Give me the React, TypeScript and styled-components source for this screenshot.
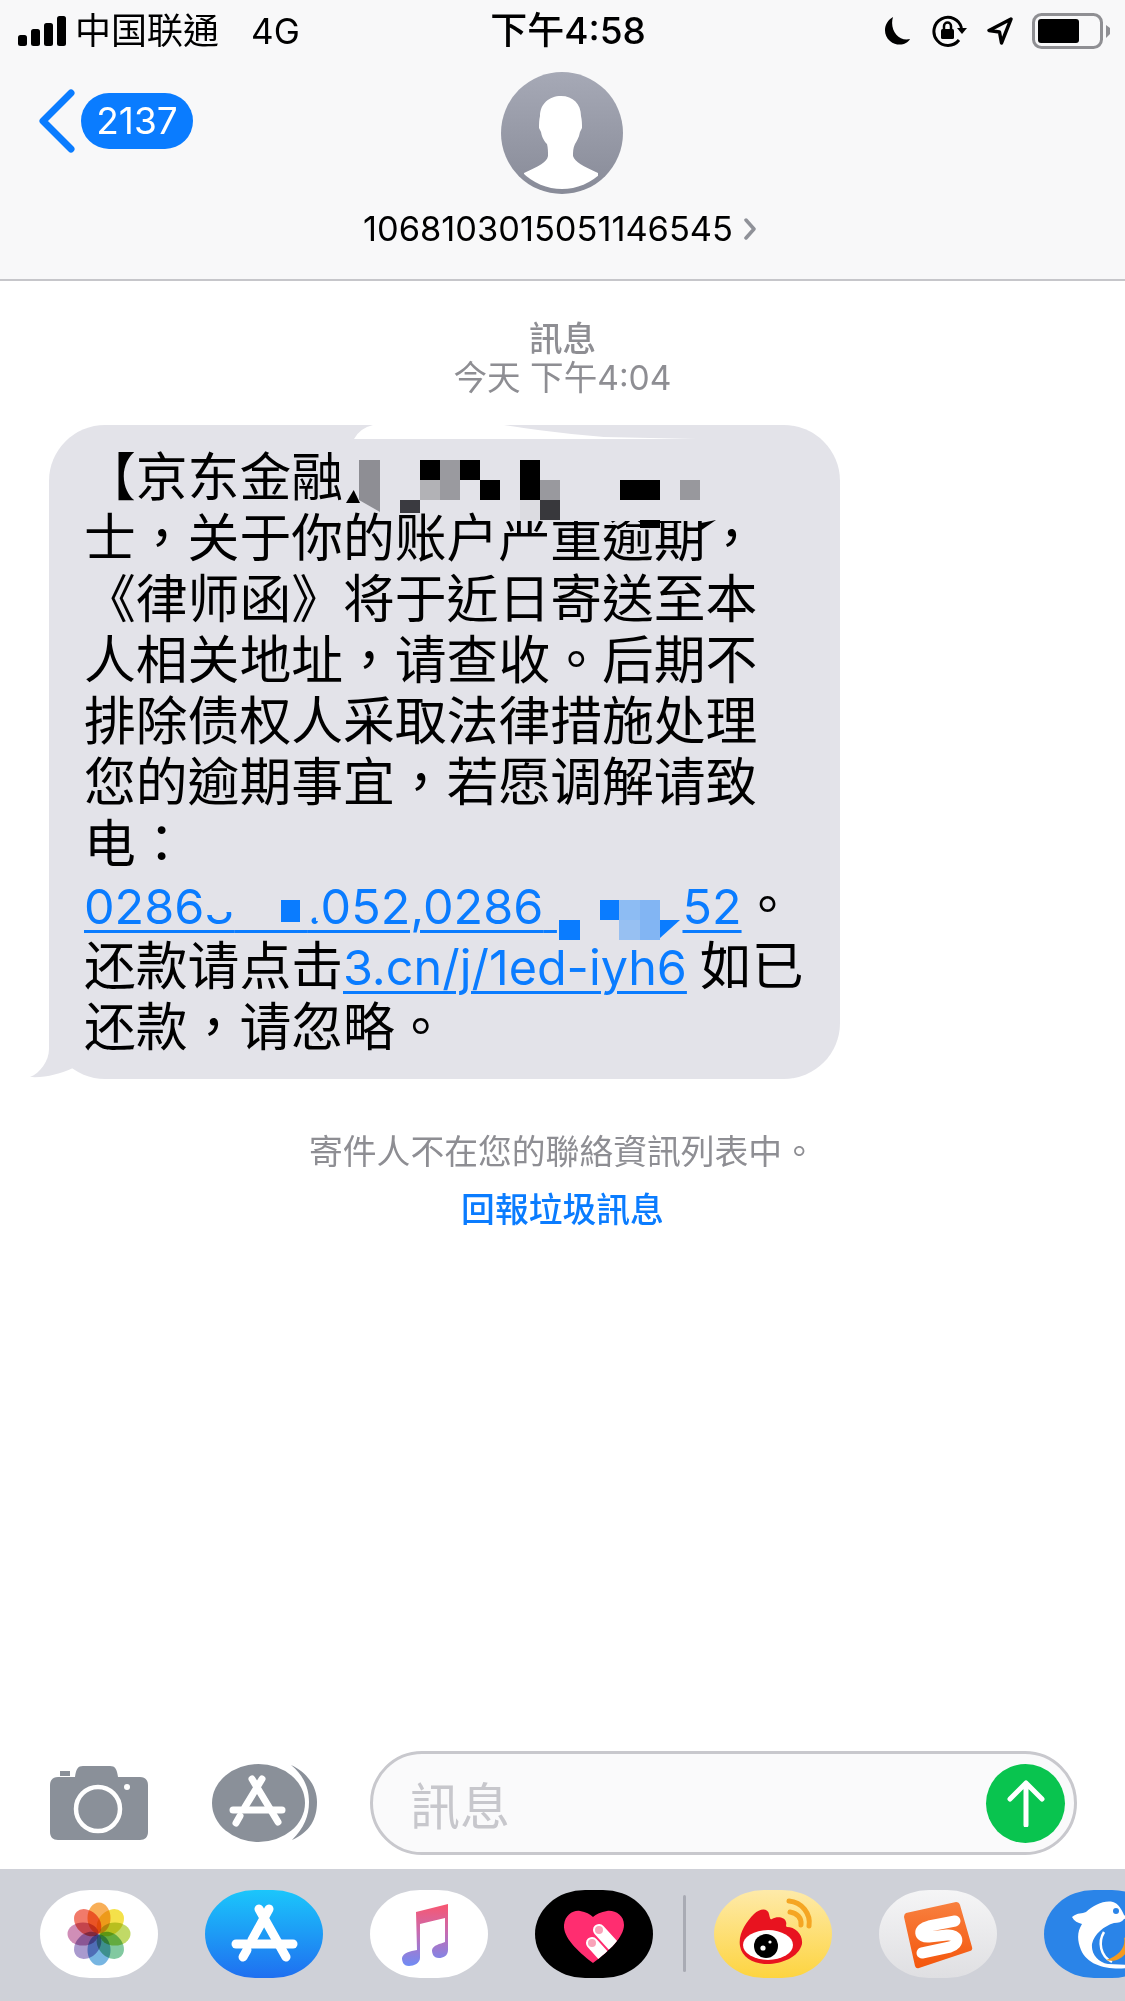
import React from "react";
import styled, { createGlobalStyle } from "styled-components";

const Global = createGlobalStyle`
  html, body { margin: 0; padding: 0; background: #fff; }
  body { font-family: Inter, "Noto Sans CJK TC", sans-serif; }
`;

const Page = styled.div`
  width: 1125px;
  height: 2001px;
  display: flex;
  flex-direction: column;
  overflow: hidden;
  background: #fff;
  color: #000;
`;

const Header = styled.header`
  height: 279px;
  flex-shrink: 0;
  background: #f8f8f9;
  border-bottom: 2px solid #c6c6ca;
`;

const StatusBar = styled.div`
  height: 62px;
  display: grid;
  grid-template-columns: 1fr auto 1fr;
  align-items: center;
  padding: 0 15px 0 18px;
`;

const StatusLeft = styled.div`
  display: flex;
  align-items: center;
  font-size: 36px;
  line-height: 62px;
`;

const Carrier = styled.span`
  margin-left: 9px;
`;

const Network = styled.span`
  margin-left: 32px;
  font-size: 35px;
`;

const Clock = styled.div`
  font-size: 37px;
  font-weight: 500;
  line-height: 62px;
  margin-left: 8px;
`;

const StatusRight = styled.div`
  display: flex;
  align-items: center;
  justify-content: flex-end;
  gap: 19px;
`;

const Nav = styled.div`
  display: grid;
  grid-template-columns: 1fr auto 1fr;
`;

const Back = styled.div`
  display: flex;
  align-items: center;
  padding: 27px 0 0 38px;
  gap: 5px;
  align-self: start;
`;

const Badge = styled.div`
  width: 112px;
  height: 56px;
  border-radius: 28px;
  background: #0a7cff;
  color: #fff;
  font-size: 37px;
  line-height: 56px;
  text-align: center;
`;

const Contact = styled.div`
  display: flex;
  flex-direction: column;
  align-items: center;
  padding-top: 10px;
`;

const NumberRow = styled.div`
  display: flex;
  align-items: center;
  gap: 10px;
  font-size: 34.4px;
  line-height: 40px;
  margin: 15px 5px 0 0;
`;

const Thread = styled.main`
  flex: 1;
  display: flex;
  flex-direction: column;
  align-items: center;
  padding-top: 38px;
`;

const Stamp = styled.div`
  font-size: 33.6px;
  line-height: 39px;
  color: #8e8e93;
  text-align: center;
  font-weight: ${(p: { $strong?: boolean }) => (p.$strong ? 500 : 400)};
`;

const Bubble = styled.div`
  position: relative;
  align-self: flex-start;
  box-sizing: border-box;
  width: 791px;
  height: 654px;
  margin: 28px 0 0 49px;
  padding: 22px 0 0 35px;
  border-radius: 56px;
  background: #e3e3e9;
`;

const Line = styled.div`
  height: 61.1px;
  line-height: 61.1px;
  font-size: 51.8px;
  white-space: nowrap;
`;

const Link = styled.span`
  color: #0a7cff;
  font-size: 48.5px;
  text-decoration: underline;
  text-decoration-thickness: 3px;
  text-underline-offset: 6px;
`;

const Gap = styled.span<{ $w: number }>`
  letter-spacing: ${(p) => p.$w}px;
`;

const Spaced = styled.span`
  margin-left: 13px;
`;

const Tail = styled.svg`
  position: absolute;
  left: -19px;
  bottom: 0;
`;

const Smear = styled.svg`
  position: absolute;
  left: 305px;
  top: 0;
`;

const Patch = styled.div<{ $x: number; $y: number; $w: number; $h: number; $c: string; $clip?: string }>`
  position: absolute;
  left: ${(p) => p.$x - 49}px;
  top: ${(p) => p.$y - 425}px;
  width: ${(p) => p.$w}px;
  height: ${(p) => p.$h}px;
  background: ${(p) => p.$c};
  clip-path: ${(p) => p.$clip || "none"};
`;

const Notice = styled.div`
  margin-top: 50px;
  font-size: 33.8px;
  line-height: 46px;
  color: #8e8e93;
  white-space: nowrap;
`;

const Report = styled.div`
  margin-top: 12px;
  font-size: 33.8px;
  line-height: 46px;
  font-weight: 500;
  color: #0a7cff;
`;

const Compose = styled.div`
  display: flex;
  align-items: center;
  height: 104px;
  padding-left: 50px;
  margin-bottom: 14px;
  flex-shrink: 0;
`;

const AppsButton = styled.div`
  margin-left: 64px;
  display: flex;
`;

const Field = styled.div`
  box-sizing: border-box;
  width: 707px;
  height: 104px;
  margin-left: 52px;
  border: 3px solid #c8c8cd;
  border-radius: 52px;
  background: #fafafb;
  display: flex;
  align-items: center;
  justify-content: space-between;
  padding: 0 9px 0 37px;
`;

const Placeholder = styled.span`
  font-size: 50px;
  color: #c7c7cc;
`;

const Send = styled.div`
  width: 79px;
  height: 79px;
  border-radius: 50%;
  background: #09c44f;
  display: flex;
  align-items: center;
  justify-content: center;
`;

const Dock = styled.div`
  box-sizing: border-box;
  height: 132px;
  flex-shrink: 0;
  background: #cfd1d8;
  display: flex;
  align-items: flex-start;
  padding: 21px 0 0 40px;
  gap: 47px;
`;

const AppIcon = styled.div<{ $bg: string }>`
  width: 118px;
  height: 88px;
  flex-shrink: 0;
  border-radius: 50px / 44px;
  background: ${(p) => p.$bg};
  overflow: hidden;
  display: flex;
`;

const DockDivider = styled.div`
  width: 3px;
  height: 77px;
  margin: 5px -19px 0 -17px;
  flex-shrink: 0;
  border-radius: 2px;
  background: #a9abb4;
`;

type Block = [number, number, number, number, string, string?];

const mosaic: Block[] = [
  [500, 503, 225, 18, "#e3e3e9"],
  [346, 490, 14, 13, "#000", "polygon(55% 0, 100% 100%, 0 100%)"],
  [359, 460, 21, 40, "#8e8e94"],
  [359, 500, 21, 12, "#8e8e94", "polygon(0 0, 100% 0, 100% 100%)"],
  [420, 460, 20, 20, "#000"],
  [440, 460, 20, 40, "#9a9a9f"],
  [460, 460, 20, 20, "#000"],
  [480, 480, 20, 20, "#000"],
  [420, 480, 20, 20, "#b2b2b6"],
  [400, 500, 20, 13, "#3a3a40"],
  [520, 460, 20, 40, "#000"],
  [540, 480, 20, 20, "#99999e"],
  [520, 500, 20, 20, "#dcdce1"],
  [540, 500, 20, 20, "#38383c"],
  [620, 480, 40, 20, "#000"],
  [680, 480, 20, 20, "#98989d"],
  [640, 520, 20, 8, "#000"],
  [700, 520, 16, 11, "#000", "polygon(0 30%, 100% 0, 0 100%)"],
  [208, 882, 34, 30, "#e3e3e9"],
  [316, 885, 7, 36, "#e3e3e9"],
  [281, 900, 19, 22, "#0a7cff"],
  [559, 920, 21, 20, "#0a7cff"],
  [600, 900, 19, 20, "#0a7cff"],
  [619, 900, 21, 20, "#8dbcf3"],
  [640, 900, 20, 40, "#82b5f3"],
  [619, 920, 21, 20, "#97c0f2"],
  [660, 920, 20, 18, "#0a7cff", "polygon(0 0, 100% 0, 0 100%)"],
];

const FLOWER = ["#f7a13a", "#f2dc2a", "#b6d24b", "#6cc08f", "#5fa8dc", "#9a88c6", "#c87aab", "#ef6350"];

const HEART = "M58 73 C42 61 28 47 29 35 C30 25 38 20 45 21 C51 22 55 24 58 27 C61 24 66 22 72 21 C80 20 89 25 89 35 C89 47 74 61 58 73 Z";

const Icon = styled.svg`
  display: block;
  flex-shrink: 0;
`;

export default function App() {
  return (
    <Page>
      <Global />
      <Header>
        <StatusBar>
          <StatusLeft>
            <Icon width="48" height="30" viewBox="0 0 48 30">
              <rect x="0" y="19" width="9" height="11" rx="2.5" />
              <rect x="13" y="13" width="9" height="17" rx="2.5" />
              <rect x="26" y="7" width="9" height="23" rx="2.5" />
              <rect x="39" y="0" width="9" height="30" rx="2.5" />
            </Icon>
            <Carrier>中国联通</Carrier>
            <Network>4G</Network>
          </StatusLeft>
          <Clock>下午4:58</Clock>
          <StatusRight>
            <Icon width="31" height="30" viewBox="0 0 31 30">
              <path d="M11 1 C2 6 0 18 8 25 C15 31 25 29 28 23 C17 26 7 14 11 1 Z" />
            </Icon>
            <Icon width="35" height="32" viewBox="0 0 35 32">
              <path d="M27 25 A14 14 0 1 1 29.5 13" fill="none" stroke="#000" strokeWidth="3" />
              <path d="M25 13 L35 13 L30 19 Z" />
              <rect x="9" y="14" width="13" height="10" rx="1.5" />
              <path d="M12 14 V11 A3.5 3.5 0 0 1 19 11 V14" fill="none" stroke="#000" strokeWidth="2.5" />
            </Icon>
            <Icon width="27" height="28" viewBox="0 0 27 28">
              <path d="M25 2 L3 13.5 L13.5 15 L15.5 26 Z" fill="none" stroke="#000" strokeWidth="3.4" strokeLinejoin="round" />
            </Icon>
            <Icon width="78" height="36" viewBox="0 0 78 36">
              <rect x="1.5" y="1.5" width="68" height="33" rx="8" fill="none" stroke="#8f8f93" strokeWidth="3" />
              <rect x="6" y="6" width="41" height="24" rx="3" />
              <path d="M74 12 L78 15 V21 L74 25 Z" fill="#8f8f93" />
            </Icon>
          </StatusRight>
        </StatusBar>
        <Nav>
          <Back>
            <Icon width="38" height="64" viewBox="0 0 38 64">
              <path d="M33 4 L5 32 L33 60" fill="none" stroke="#0a7cff" strokeWidth="7" strokeLinecap="round" strokeLinejoin="round" />
            </Icon>
            <Badge>2137</Badge>
          </Back>
          <Contact>
            <Icon width="122" height="122" viewBox="0 0 122 122">
              <defs>
                <linearGradient id="av" x1="0" y1="0" x2="0" y2="1">
                  <stop offset="0" stopColor="#a6a9b6" />
                  <stop offset="1" stopColor="#888b98" />
                </linearGradient>
                <clipPath id="avc">
                  <circle cx="61" cy="61" r="56" />
                </clipPath>
              </defs>
              <circle cx="61" cy="61" r="61" fill="url(#av)" />
              <g clipPath="url(#avc)">
                <path
                  fill="#fff"
                  d="M60 24 C72 24 80 32 80 44 C81 48 81 52 81 56 L79 60 C78 66 75 70 74 72 C72 76 72 80 72 84 C74 90 82 94 97 101 L97 122 L23 122 L23 101 C38 94 46 90 47 84 C47 80 47 76 46 72 C44 70 41 66 40 60 L38 56 C38 52 38 48 39 44 C39 32 48 24 60 24 Z"
                />
              </g>
            </Icon>
            <NumberRow>
              1068103015051146545
              <Icon width="14" height="22" viewBox="0 0 14 22">
                <path d="M3 2 L11 11 L3 20" fill="none" stroke="#8f9198" strokeWidth="3.5" strokeLinecap="round" strokeLinejoin="round" />
              </Icon>
            </NumberRow>
          </Contact>
        </Nav>
      </Header>

      <Thread>
        <Stamp $strong>訊息</Stamp>
        <Stamp>今天 下午4:04</Stamp>
        <Bubble>
          <Tail width="44" height="60" viewBox="0 0 44 60">
            <path d="M19 0 L19 30 C19 42 10 54 0 58 C15 59 30 55 43 49 L43 0 Z" fill="#e3e3e9" />
          </Tail>
          <Line>【京东金融</Line>
          <Line>士，关于你的账户严重逾期，</Line>
          <Line>《律师函》将于近日寄送至本</Line>
          <Line>人相关地址，请查收。后期不</Line>
          <Line>排除债权人采取法律措施处理</Line>
          <Line>您的逾期事宜，若愿调解请致</Line>
          <Line>电：</Line>
          <Line>
            <Link>
              02863
              <Gap $w={60}>&nbsp;</Gap>.052,0286<Gap $w={0}>&nbsp;</Gap>
            </Link>
            <Gap $w={111}>&nbsp;</Gap>
            <Link>52</Link>。
          </Line>
          <Line>
            还款请点击<Link>3.cn/j/1ed-iyh6</Link>
            <Spaced>如已</Spaced>
          </Line>
          <Line>还款，请忽略。</Line>
          <Smear width="345" height="15" viewBox="0 0 345 15">
            <path d="M0 14 Q6 3 19 0 L150 0 Q200 8 250 12 L343 14 Z" fill="#fff" />
          </Smear>
          {mosaic.map(([x, y, w, h, c, clip], i) => (
            <Patch key={i} $x={x} $y={y} $w={w} $h={h} $c={c} $clip={clip} />
          ))}
        </Bubble>
        <Notice>寄件人不在您的聯絡資訊列表中。</Notice>
        <Report>回報垃圾訊息</Report>
      </Thread>

      <Compose>
        <Icon width="98" height="74" viewBox="0 0 98 74">
          <path
            fill="#8a9099"
            d="M33 0 H60 C65 0 67 3 68 11 H90 C95 11 98 14 98 19 V66 C98 71 95 74 90 74 H8 C3 74 0 71 0 66 V19 C0 14 3 11 8 11 H25 C26 3 28 0 33 0 Z"
          />
          <rect x="10" y="5" width="10" height="5" fill="#8a9099" />
          <circle cx="48" cy="43" r="22" fill="none" stroke="#fff" strokeWidth="4.5" />
          <circle cx="77" cy="21" r="3" fill="#fff" />
        </Icon>
        <AppsButton>
          <Icon width="106" height="78" viewBox="0 0 106 78">
            <ellipse cx="46.5" cy="39" rx="46.5" ry="39" fill="#8a9099" />
            <path d="M79 1 C98 10 105 25 105 38 C105 55 98 68 80 76 C92 64 97 52 97 38 C97 24 92 12 79 1 Z" fill="#8a9099" />
            <g stroke="#fff" strokeWidth="7" strokeLinecap="round" fill="none">
              <path d="M50 15 L33 43" />
              <path d="M28 52 L24 59" />
              <path d="M40 15 L66 58" />
              <path d="M21 46 L70 46" />
            </g>
          </Icon>
        </AppsButton>
        <Field>
          <Placeholder>訊息</Placeholder>
          <Send>
            <Icon width="40" height="48" viewBox="0 0 40 48">
              <path d="M20 46 V4 M4 20 L20 4 L36 20" fill="none" stroke="#fff" strokeWidth="5" strokeLinecap="round" strokeLinejoin="round" />
            </Icon>
          </Send>
        </Field>
      </Compose>

      <Dock>
        <AppIcon $bg="#fff">
          <Icon width="118" height="88" viewBox="0 0 118 88">
            {FLOWER.map((c, i) => (
              <ellipse
                key={c}
                cx="59"
                cy="28"
                rx="11.5"
                ry="15.5"
                fill={c}
                opacity="0.85"
                style={{ mixBlendMode: "multiply" }}
                transform={`rotate(${i * 45} 59 44)`}
              />
            ))}
          </Icon>
        </AppIcon>
        <AppIcon $bg="linear-gradient(#1bc6fb, #1f6ff0)">
          <Icon width="118" height="88" viewBox="0 0 118 88">
            <g stroke="#fff" strokeWidth="9" strokeLinecap="round" fill="none">
              <path d="M64 19 L47 50" />
              <path d="M42 60 L38 67" />
              <path d="M54 19 L81 67" />
              <path d="M31 54 L88 54" />
            </g>
          </Icon>
        </AppIcon>
        <AppIcon $bg="#fff">
          <Icon width="118" height="88" viewBox="0 0 118 88">
            <defs>
              <linearGradient id="note" x1="0" y1="0" x2="0" y2="1">
                <stop offset="0" stopColor="#f9566f" />
                <stop offset="0.45" stopColor="#c86bb0" />
                <stop offset="1" stopColor="#6f8cf5" />
              </linearGradient>
            </defs>
            <path
              fill="url(#note)"
              d="M46 22 L78 14 V60 C78 66 73 68 69 68 C63 68 62 63 62 60 C63 55 70 54 75 52 V28 L50 34 V68 C50 73 44 76 39 76 C33 76 32 71 32 68 C33 63 40 61 47 60 Z"
            />
          </Icon>
        </AppIcon>
        <AppIcon $bg="#000">
          <Icon width="118" height="88" viewBox="0 0 118 88">
            <defs>
              <clipPath id="heart">
                <path d={HEART} />
              </clipPath>
            </defs>
            <path fill="#ff2d70" d={HEART} />
            <g clipPath="url(#heart)">
              <path d="M64 40 L84 62 M57 53 L75 73" stroke="#fff" strokeWidth="12" strokeLinecap="round" />
            </g>
            <circle cx="64" cy="40" r="4" fill="#f9a3b9" />
            <circle cx="57" cy="53" r="4" fill="#f9a3b9" />
          </Icon>
        </AppIcon>
        <DockDivider />
        <AppIcon $bg="linear-gradient(#feeaa9, #fdd440)">
          <Icon width="118" height="88" viewBox="0 0 118 88">
            <path
              fill="#e8131f"
              d="M26 56 C24 44 32 32 40 24 C46 18 54 18 55 24 C56 28 56 30 58 29 C63 26 71 27 72 32 C73 34 71 36 73 37 C81 37 89 44 88 54 C85 67 68 74 53 74 C40 74 28 68 26 56 Z"
            />
            <ellipse cx="54" cy="55" rx="25" ry="15" fill="#fff" />
            <circle cx="52" cy="56" r="12" fill="#000" />
            <circle cx="49" cy="58" r="2.6" fill="#fff" />
            <circle cx="56" cy="52" r="1.6" fill="#fff" />
            <path d="M75 11 C88 12 97 24 95 36 M76 22 C83 23 88 28 87 35" fill="none" stroke="#f5a623" strokeWidth="5" strokeLinecap="round" />
          </Icon>
        </AppIcon>
        <AppIcon $bg="linear-gradient(#f5f5f6, #dfdfe2)">
          <Icon width="118" height="88" viewBox="0 0 118 88">
            <defs>
              <linearGradient id="sg" x1="0" y1="0" x2="0" y2="1">
                <stop offset="0" stopColor="#f8803f" />
                <stop offset="1" stopColor="#f4560c" />
              </linearGradient>
            </defs>
            <path d="M27 23 L77 12 Q80 12 81 15 L93 57 Q94 60 91 61 L40 78 Q37 79 36 76 L25 27 Q25 24 27 23 Z" fill="url(#sg)" />
            <path d="M76 31 L50 36 C38 39 40 48 50 47 L68 45 C80 44 81 54 71 57 L43 63" fill="none" stroke="#fff" strokeWidth="11" strokeLinecap="round" strokeLinejoin="round" />
          </Icon>
        </AppIcon>
        <AppIcon $bg="#2a84e8">
          <Icon width="118" height="88" viewBox="0 0 118 88">
            <path
              fill="#fff"
              d="M28 27 C34 22 38 24 42 22 C50 15 60 10 69 12 C74 13 78 20 80 25 L84 28 L80 29 C78 32 74 33 70 33 C60 36 50 44 48 54 C47 64 54 72 64 74 L84 75 L84 78 C64 80 44 76 37 60 C33 50 33 42 38 34 C34 33 30 31 28 27 Z"
            />
            <circle cx="72" cy="21" r="3" fill="#2a84e8" />
            <path d="M60 42 C54 52 56 66 68 72" fill="none" stroke="#fff" strokeWidth="2.5" />
            <path d="M62 70 C70 72 78 70 84 60 L84 46 L80 48 C82 56 76 66 62 70 Z" fill="#f39a1f" />
          </Icon>
        </AppIcon>
      </Dock>
    </Page>
  );
}
